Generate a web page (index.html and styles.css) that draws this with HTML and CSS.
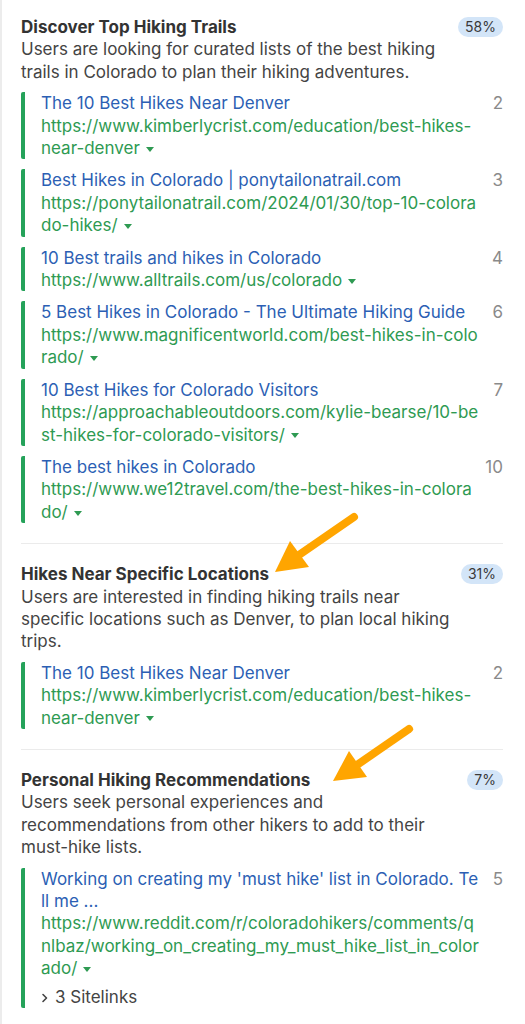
FILE: index.html
```html
<!DOCTYPE html>
<html>
<head>
<meta charset="utf-8">
<link rel="stylesheet" href="styles.css">
</head>
<body>
<div class="page">
  <section class="intent">
    <div class="intent-head">
      <div class="intent-text">
        <h2 class="intent-title">Discover Top Hiking Trails</h2>
        <p class="intent-desc">Users are looking for curated lists of the best hiking trails in Colorado to plan their hiking adventures.</p>
      </div>
      <span class="badge">58%</span>
    </div>
    <ul class="results">
      <li class="result">
        <div class="result-body">
          <div class="result-title">The 10 Best Hikes Near Denver</div>
          <div class="result-url">https://www.kimberlycrist.com/education/best-hikes-near-denver<span class="caret"></span></div>
        </div>
        <span class="pos">2</span>
      </li>
      <li class="result">
        <div class="result-body">
          <div class="result-title">Best Hikes in Colorado | ponytailonatrail.com</div>
          <div class="result-url">https://ponytailonatrail.com/2024/01/30/top-10-colorado-hikes/<span class="caret"></span></div>
        </div>
        <span class="pos">3</span>
      </li>
      <li class="result">
        <div class="result-body">
          <div class="result-title">10 Best trails and hikes in Colorado</div>
          <div class="result-url">https://www.alltrails.com/us/colorado<span class="caret"></span></div>
        </div>
        <span class="pos">4</span>
      </li>
      <li class="result">
        <div class="result-body">
          <div class="result-title">5 Best Hikes in Colorado - The Ultimate Hiking Guide</div>
          <div class="result-url">https://www.magnificentworld.com/best-hikes-in-colorado/<span class="caret"></span></div>
        </div>
        <span class="pos">6</span>
      </li>
      <li class="result">
        <div class="result-body">
          <div class="result-title">10 Best Hikes for Colorado Visitors</div>
          <div class="result-url">https://approachableoutdoors.com/kylie-bearse/10-best-hikes-for-colorado-visitors/<span class="caret"></span></div>
        </div>
        <span class="pos">7</span>
      </li>
      <li class="result">
        <div class="result-body">
          <div class="result-title">The best hikes in Colorado</div>
          <div class="result-url">https://www.we12travel.com/the-best-hikes-in-colorado/<span class="caret"></span></div>
        </div>
        <span class="pos">10</span>
      </li>
    </ul>
  </section>

  <section class="intent">
    <div class="intent-head">
      <div class="intent-text">
        <h2 class="intent-title">Hikes Near Specific Locations</h2>
        <p class="intent-desc">Users are interested in finding hiking trails near specific locations such as Denver, to plan local hiking trips.</p>
      </div>
      <span class="badge">31%</span>
    </div>
    <ul class="results">
      <li class="result">
        <div class="result-body">
          <div class="result-title">The 10 Best Hikes Near Denver</div>
          <div class="result-url">https://www.kimberlycrist.com/education/best-hikes-near-denver<span class="caret"></span></div>
        </div>
        <span class="pos">2</span>
      </li>
    </ul>
  </section>

  <section class="intent">
    <div class="intent-head">
      <div class="intent-text">
        <h2 class="intent-title">Personal Hiking Recommendations</h2>
        <p class="intent-desc">Users seek personal experiences and recommendations from other hikers to add to their must-hike lists.</p>
      </div>
      <span class="badge">7%</span>
    </div>
    <ul class="results">
      <li class="result">
        <div class="result-body">
          <div class="result-title">Working on creating my 'must hike' list in Colorado. Tell me ...</div>
          <div class="result-url">https://www.reddit.com/r/coloradohikers/comments/qnlbaz/working_on_creating_my_must_hike_list_in_colorado/<span class="caret"></span></div>
          <div class="sitelinks"><svg class="chev" width="8" height="10" viewBox="0 0 8 10"><path d="M2 1.5 L5.5 5 L2 8.5" fill="none" stroke="#444" stroke-width="1.6" stroke-linecap="round" stroke-linejoin="round"/></svg>3 Sitelinks</div>
        </div>
        <span class="pos">5</span>
      </li>
    </ul>
  </section>

  <svg class="arrows" width="525" height="1024" viewBox="0 0 525 1024">
    <line x1="352" y1="517" x2="294" y2="557" stroke="#ffa500" stroke-width="8" stroke-linecap="round"/>
    <polygon points="273,572 288,541 307,567" fill="#ffa500"/>
    <line x1="407" y1="729" x2="352" y2="767" stroke="#ffa500" stroke-width="8" stroke-linecap="round"/>
    <polygon points="331,781 347,751 365,777" fill="#ffa500"/>
  </svg>
</div>
</body>
</html>
```

FILE: styles.css
```css
* { box-sizing: border-box; }
html, body { margin: 0; padding: 0; background: #fff; }
body {
  font-family: Inter, "Noto Sans", sans-serif;
  font-size: 17px;
  line-height: 22.4px;
  color: #444;
}
.page {
  position: relative;
  min-height: 1024px;
  border-left: 2px solid #ececec;
  padding: 16px 22px 0 19px;
}
.intent { padding-bottom: 20px; }
.intent + .intent {
  border-top: 1px solid #ebebeb;
  padding-top: 19px;
}
.intent-head {
  display: flex;
  align-items: flex-start;
  gap: 8px;
}
.intent-text { flex: 1; min-width: 0; }
.intent-title {
  margin: 0;
  font-size: 17px;
  font-weight: 700;
  line-height: 22.4px;
  color: #333;
}
.intent-desc { margin: 0; color: #444; }
.badge {
  flex: none;
  margin-top: 1px;
  background: #d3e5f8;
  color: #3a3a3a;
  font-size: 14px;
  line-height: 20px;
  padding: 0 7px;
  border-radius: 10px;
}
.results {
  list-style: none;
  margin: 9px 0 0;
  padding: 0;
  display: flex;
  flex-direction: column;
  gap: 10px;
}
.result {
  display: flex;
  align-items: flex-start;
  border-left: 4px solid #25a25a;
  border-radius: 2px;
  padding-left: 16px;
}
.result-body {
  flex: 1;
  min-width: 0;
  max-width: 439px;
  word-break: break-all;
}
.result-title { color: #2c5fb4; }
.result-url { color: #2e9a52; }
.caret {
  display: inline-block;
  width: 0;
  height: 0;
  border-left: 4.5px solid transparent;
  border-right: 4.5px solid transparent;
  border-top: 5px solid #2e9a52;
  margin-left: 6px;
  vertical-align: middle;
}
.sitelinks {
  margin-top: 6px;
  color: #444;
  word-break: normal;
}
.chev { margin-right: 6px; vertical-align: 0; }
.pos {
  margin-left: auto;
  color: #8a8a8a;
  text-align: right;
}
.arrows {
  position: absolute;
  top: 0;
  left: 0;
  pointer-events: none;
}
```
